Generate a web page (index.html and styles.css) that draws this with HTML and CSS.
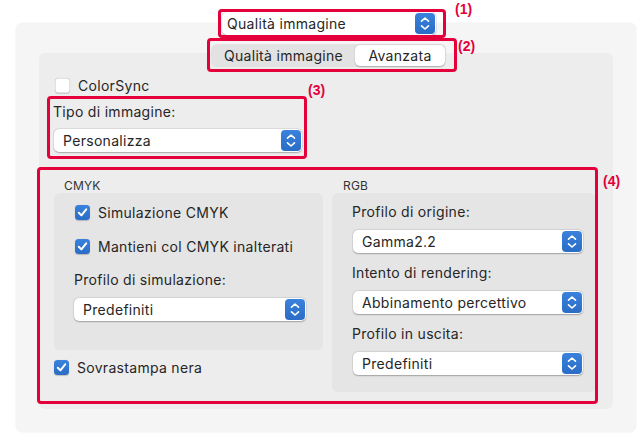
FILE: index.html
```html
<!DOCTYPE html>
<html lang="it">
<head>
<meta charset="utf-8">
<title>Qualità immagine</title>
<link rel="stylesheet" href="styles.css">
</head>
<body>
<div class="page">
  <div class="head">
    <div class="popup popup-main">
      <span class="popup-text">Qualità immagine</span>
      <span class="stepper"><svg viewBox="0 0 20 21" width="20" height="21"><path d="M6.5 8.2 L10 5 L13.5 8.2 M6.5 12.8 L10 16 L13.5 12.8" fill="none" stroke="#fff" stroke-width="1.6" stroke-linecap="round" stroke-linejoin="round"/></svg></span>
    </div>
  </div>
  <div class="outer">
    <div class="seg">
      <span class="seg-item seg-off">Qualità immagine</span>
      <span class="seg-item seg-on">Avanzata</span>
    </div>
    <div class="inner">
      <div class="check-row colorsync"><span class="cb"></span><span>ColorSync</span></div>
      <div class="field-label tipo-label">Tipo di immagine:</div>
      <div class="popup popup-tipo">
        <span class="popup-text">Personalizza</span>
        <span class="stepper"><svg viewBox="0 0 20 21" width="20" height="21"><path d="M6.5 8.2 L10 5 L13.5 8.2 M6.5 12.8 L10 16 L13.5 12.8" fill="none" stroke="#fff" stroke-width="1.6" stroke-linecap="round" stroke-linejoin="round"/></svg></span>
      </div>
      <div class="groups">
        <div class="col col-cmyk">
          <div class="group-title">CMYK</div>
          <div class="box box-cmyk">
            <div class="check-row"><span class="cb cb-on"><svg viewBox="0 0 15 15" width="15" height="15"><path d="M3.8 7.8 L6.4 10.4 L11.2 4.4" fill="none" stroke="#fff" stroke-width="2" stroke-linecap="round" stroke-linejoin="round"/></svg></span><span>Simulazione CMYK</span></div>
            <div class="check-row check-2"><span class="cb cb-on"><svg viewBox="0 0 15 15" width="15" height="15"><path d="M3.8 7.8 L6.4 10.4 L11.2 4.4" fill="none" stroke="#fff" stroke-width="2" stroke-linecap="round" stroke-linejoin="round"/></svg></span><span>Mantieni col CMYK inalterati</span></div>
            <div class="field-label sim-label">Profilo di simulazione:</div>
            <div class="popup popup-sim">
              <span class="popup-text">Predefiniti</span>
              <span class="stepper"><svg viewBox="0 0 20 21" width="20" height="21"><path d="M6.5 8.2 L10 5 L13.5 8.2 M6.5 12.8 L10 16 L13.5 12.8" fill="none" stroke="#fff" stroke-width="1.6" stroke-linecap="round" stroke-linejoin="round"/></svg></span>
            </div>
          </div>
          <div class="check-row sovra"><span class="cb cb-on"><svg viewBox="0 0 15 15" width="15" height="15"><path d="M3.8 7.8 L6.4 10.4 L11.2 4.4" fill="none" stroke="#fff" stroke-width="2" stroke-linecap="round" stroke-linejoin="round"/></svg></span><span>Sovrastampa nera</span></div>
        </div>
        <div class="col col-rgb">
          <div class="group-title rgb-title">RGB</div>
          <div class="box box-rgb">
            <div class="field-label">Profilo di origine:</div>
            <div class="popup popup-rgb">
              <span class="popup-text">Gamma2.2</span>
              <span class="stepper"><svg viewBox="0 0 20 21" width="20" height="21"><path d="M6.5 8.2 L10 5 L13.5 8.2 M6.5 12.8 L10 16 L13.5 12.8" fill="none" stroke="#fff" stroke-width="1.6" stroke-linecap="round" stroke-linejoin="round"/></svg></span>
            </div>
            <div class="field-label next">Intento di rendering:</div>
            <div class="popup popup-rgb">
              <span class="popup-text">Abbinamento percettivo</span>
              <span class="stepper"><svg viewBox="0 0 20 21" width="20" height="21"><path d="M6.5 8.2 L10 5 L13.5 8.2 M6.5 12.8 L10 16 L13.5 12.8" fill="none" stroke="#fff" stroke-width="1.6" stroke-linecap="round" stroke-linejoin="round"/></svg></span>
            </div>
            <div class="field-label next">Profilo in uscita:</div>
            <div class="popup popup-rgb">
              <span class="popup-text">Predefiniti</span>
              <span class="stepper"><svg viewBox="0 0 20 21" width="20" height="21"><path d="M6.5 8.2 L10 5 L13.5 8.2 M6.5 12.8 L10 16 L13.5 12.8" fill="none" stroke="#fff" stroke-width="1.6" stroke-linecap="round" stroke-linejoin="round"/></svg></span>
            </div>
          </div>
        </div>
      </div>
    </div>
  </div>

  <div class="ann ann-box-1"></div>
  <div class="ann ann-box-2"></div>
  <div class="ann ann-box-3"></div>
  <div class="ann ann-box-4"></div>
  <div class="ann-label ann-label-1">(1)</div>
  <div class="ann-label ann-label-2">(2)</div>
  <div class="ann-label ann-label-3">(3)</div>
  <div class="ann-label ann-label-4">(4)</div>
</div>
</body>
</html>
```

FILE: styles.css
```css
* { box-sizing: border-box; }

html, body {
  margin: 0;
  padding: 0;
  background: #ffffff;
}

body {
  font-family: Inter, "Noto Sans", "Liberation Sans", sans-serif;
  font-size: 14px;
  letter-spacing: 0.3px;
  color: #262626;
}

.page {
  position: relative;
  width: 637px;
  height: 441px;
  padding: 12px 1px 0 16px;
  overflow: hidden;
}

/* ---------- popup buttons ---------- */
.popup {
  position: relative;
  z-index: 1;
  display: flex;
  align-items: center;
  justify-content: space-between;
  height: 23px;
  padding: 0 1px 0 9px;
  background: #ffffff;
  border-radius: 5px;
  box-shadow: 0 0.5px 1.5px rgba(0, 0, 0, 0.28), 0 0 0 0.5px rgba(0, 0, 0, 0.06);
}

.popup-text {
  white-space: nowrap;
  color: #262626;
}

.stepper {
  display: block;
  width: 20px;
  height: 21px;
  border-radius: 4px;
  background: linear-gradient(#3a82dd, #2a6cc6);
}

.stepper svg { display: block; }

.head { height: 23px; }

.popup-main {
  margin-left: 206px;
  width: 214px;
  padding-left: 5px;
}

/* ---------- outer panel ---------- */
.outer {
  margin-top: -12px;
  height: 409px;
  background: #f5f5f5;
  border-radius: 6px;
  box-shadow: 0 0 0 0.5px rgba(0, 0, 0, 0.05);
  padding-top: 21px;
}

.seg {
  position: relative;
  z-index: 1;
  display: flex;
  margin-left: 195px;
  width: 235px;
  height: 23px;
  padding: 1px;
  background: #e2e2e2;
  border-radius: 6px;
}

.seg-item {
  display: flex;
  align-items: center;
  justify-content: center;
  height: 21px;
  border-radius: 5px;
  color: #262626;
}

.seg-off { width: 143px; }

.seg-on {
  width: 90px;
  background: #ffffff;
  box-shadow: 0 0.5px 1.5px rgba(0, 0, 0, 0.25);
}

/* ---------- inner tab panel ---------- */
.inner {
  margin-top: -14px;
  margin-left: 23px;
  width: 574px;
  height: 356px;
  background: #ededed;
  border-radius: 6px;
  padding-top: 25px;
}

.check-row {
  display: flex;
  align-items: center;
  gap: 8px;
  height: 15px;
  line-height: 15px;
}

.cb {
  display: block;
  width: 15px;
  height: 15px;
  flex: none;
  border-radius: 3.5px;
  background: #ffffff;
  box-shadow: inset 0 0 0 0.5px rgba(0, 0, 0, 0.22), 0 0.5px 1px rgba(0, 0, 0, 0.15);
}

.cb svg { display: block; }

.cb-on {
  background: linear-gradient(#3a82dd, #2a6cc6);
  box-shadow: 0 0.5px 1px rgba(0, 0, 0, 0.2);
}

.colorsync { margin-left: 16px; }

.field-label {
  line-height: 16px;
  height: 16px;
  white-space: nowrap;
}

.tipo-label {
  margin: 11px 0 0 14px;
}

.popup-tipo {
  margin: 9px 0 0 15px;
  width: 248px;
}

.groups {
  display: flex;
  gap: 9px;
  margin: 27px 0 0 15px;
}

.group-title {
  height: 14px;
  line-height: 14px;
  font-size: 12px;
  letter-spacing: 0.2px;
  padding-left: 10px;
  color: #333333;
}

.rgb-title { padding-left: 11px; }

.box {
  background: #e5e5e5;
  border-radius: 6px;
}

.col-cmyk { width: 269px; }
.col-rgb { width: 264px; }

.box-cmyk {
  height: 157px;
  padding: 12px 0 0 20px;
}

.box-cmyk .check-row { margin-left: 1px; }
.box-cmyk .check-2 { margin-top: 19px; }

.sim-label { margin-top: 18px; }

.popup-sim {
  margin-top: 10px;
  width: 232px;
}

.sovra { margin-top: 10px; }

.box-rgb {
  height: 199px;
  padding: 11px 0 0 20px;
}

.popup-rgb {
  margin: 10px 0 0 1px;
  width: 230px;
}

.field-label.next { margin-top: 12px; }

/* ---------- annotations (overlay) ---------- */
.ann {
  position: absolute;
  z-index: 5;
  border: 3px solid #e4003b;
  border-radius: 4px;
}

.ann-box-1 { left: 218px; top: 9px;  width: 228px; height: 29px; }
.ann-box-2 { left: 207px; top: 38px; width: 250px; height: 34px; }
.ann-box-3 { left: 47px;  top: 96px; width: 260px; height: 63px; }
.ann-box-4 { left: 37px;  top: 167px; width: 561px; height: 237px; }

.ann-label {
  position: absolute;
  z-index: 5;
  font-family: "Liberation Sans", Arial, sans-serif;
  font-weight: bold;
  font-size: 14px;
  line-height: 14px;
  letter-spacing: 0;
  color: #e4003b;
}

.ann-label-1 { left: 455px; top: 2px; }
.ann-label-2 { left: 458px; top: 39px; }
.ann-label-3 { left: 308px; top: 83px; }
.ann-label-4 { left: 603px; top: 174px; }
```
